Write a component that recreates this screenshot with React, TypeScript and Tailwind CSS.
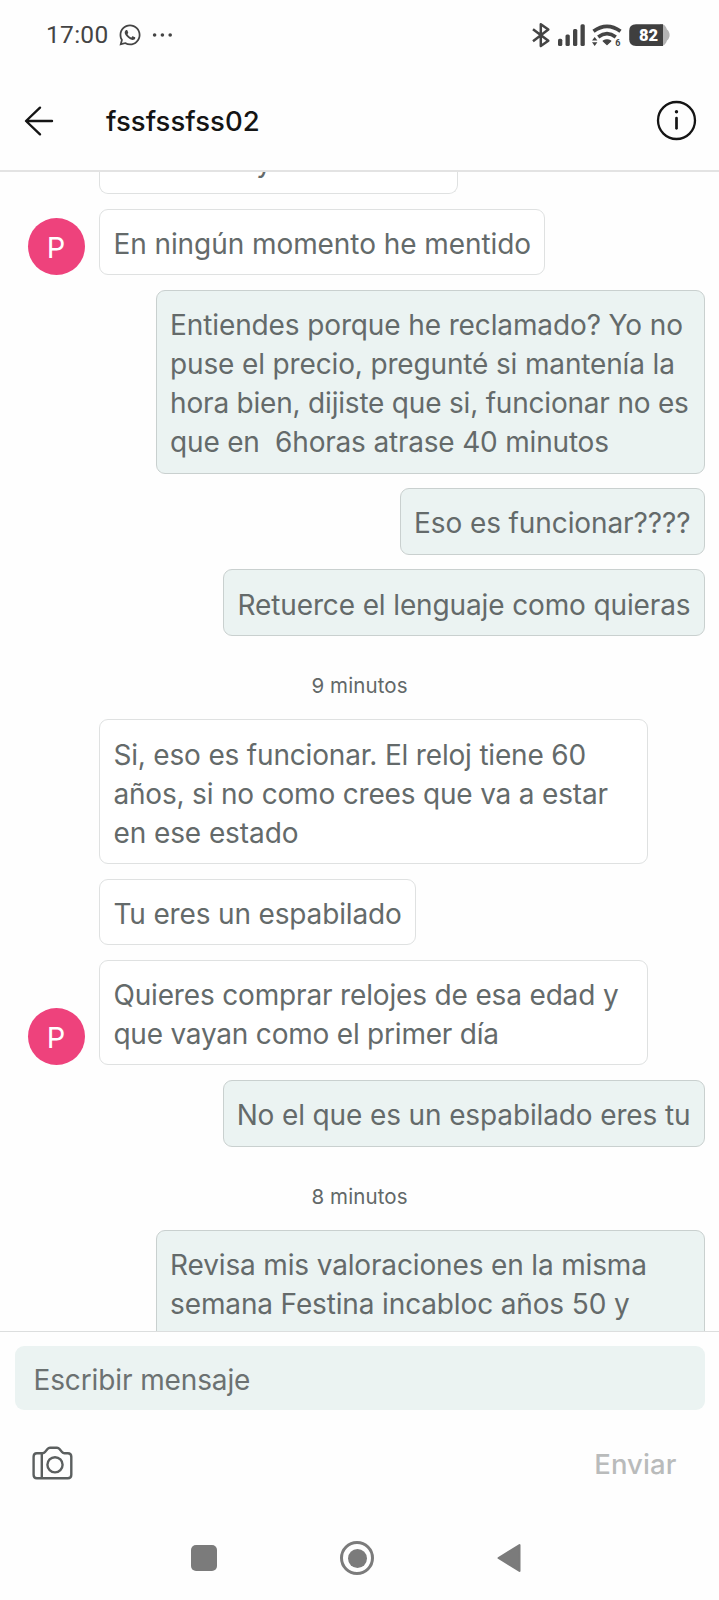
import React from "react";
import { FaWhatsapp } from "react-icons/fa";

type Line = [text: string, tracking: string];

type Item =
  | { kind: "in" | "out"; lines: Line[]; avatar?: boolean; full?: boolean }
  | { kind: "time"; label: string };

const items: Item[] = [
  { kind: "in", lines: [["En ningún momento he mentido", "tracking-[-0.07px]"]], avatar: true },
  {
    kind: "out",
    full: true,
    lines: [
      ["Entiendes porque he reclamado? Yo no", "tracking-[-0.12px]"],
      ["puse el precio, pregunté si mantenía la", "tracking-[-0.15px]"],
      ["hora bien, dijiste que si, funcionar no es", "tracking-[-0.2px]"],
      ["que en  6horas atrase 40 minutos", "tracking-[-0.19px]"],
    ],
  },
  { kind: "out", lines: [["Eso es funcionar????", "tracking-[-0.1px]"]] },
  { kind: "out", lines: [["Retuerce el lenguaje como quieras", "tracking-[-0.13px]"]] },
  { kind: "time", label: "9 minutos" },
  {
    kind: "in",
    full: true,
    lines: [
      ["Si, eso es funcionar. El reloj tiene 60", "tracking-[-0.18px]"],
      ["años, si no como crees que va a estar", "tracking-[-0.18px]"],
      ["en ese estado", "tracking-[-0.08px]"],
    ],
  },
  { kind: "in", lines: [["Tu eres un espabilado", "tracking-[-0.15px]"]] },
  {
    kind: "in",
    full: true,
    avatar: true,
    lines: [
      ["Quieres comprar relojes de esa edad y", "tracking-[-0.16px]"],
      ["que vayan como el primer día", "tracking-[-0.21px]"],
    ],
  },
  { kind: "out", lines: [["No el que es un espabilado eres tu", "tracking-[-0.13px]"]] },
  { kind: "time", label: "8 minutos" },
  {
    kind: "out",
    full: true,
    lines: [
      ["Revisa mis valoraciones en la misma", "tracking-[-0.15px]"],
      ["semana Festina incabloc años 50 y", "tracking-[-0.14px]"],
      ["", ""],
    ],
  },
];

function StatusBar() {
  return (
    <div className="flex h-[69px] shrink-0 items-center justify-between pl-[46px] pr-[49px] text-[#444]">
      <div className="flex items-center">
        <span className="w-[73px] font-['Roboto',sans-serif] text-[24.5px] leading-[30px] tracking-[0.3px]">17:00</span>
        <FaWhatsapp className="h-[24px] w-[22px]" />
        <svg className="ml-[11px]" width="22" height="6" viewBox="0 0 22 6" fill="currentColor">
          <circle cx="2.6" cy="3" r="1.8" />
          <circle cx="10.4" cy="3" r="1.8" />
          <circle cx="18.2" cy="3" r="1.8" />
        </svg>
      </div>
      <svg width="140" height="28" viewBox="530 20 140 28" fill="none">
        <path d="M533 28.2L548.3 39.8L540.8 45V23.2L548.3 28.6L533 40.3" stroke="#444" strokeWidth="2.5" strokeLinejoin="round" />
        <g fill="#444">
          <rect x="558" y="37.7" width="4.3" height="7.3" rx="1.5" />
          <rect x="565.5" y="33.6" width="4.3" height="11.4" rx="1.5" />
          <rect x="573" y="28" width="4.3" height="17" rx="1.5" />
          <rect x="580.5" y="23.3" width="4.3" height="21.7" rx="1.5" />
          <path d="M603.2 40Q607 37.6 610.8 40L607 43.600Z" stroke="#444" strokeWidth="1.2" strokeLinejoin="round" />
          <path d="M592 39.6L594.7 36L597.4 39.600Z M592 41.300L594.700 45L597.400 41.300Z" />
        </g>
        <path d="M593.500 30.300Q607 20.300 620.500 30.300M598.200 36Q607 29.400 615.800 36" stroke="#444" strokeWidth="3.600" />
        <text x="615.3" y="45" fontSize="9" fontWeight="700" fill="#444" fontFamily="Roboto, sans-serif">6</text>
        <path d="M660 23C665 23 666 26 667 28.5C670.5 31 670.5 37 667 39.5C666 42 665 45 660 45Z" fill="#b4b4b4" />
        <path d="M636 23.3H663V45H636Q629.2 45 629.2 38.3V30Q629.2 23.3 636 23.3Z" fill="#3f3f3f" />
        <text x="639" y="40" fontSize="16.5" fontWeight="900" fill="#fff" fontFamily="Roboto, sans-serif">82</text>
      </svg>
    </div>
  );
}

function Header() {
  return (
    <header className="flex h-[103px] shrink-0 items-center border-b-2 border-[#e3e3e3] pl-[24px] pr-[22px] pt-[2px] text-[#151515]">
      <svg width="30" height="30" viewBox="0 0 30 30" fill="none" stroke="currentColor" strokeWidth="2.4" strokeLinecap="round" strokeLinejoin="round">
        <path d="M28 15H2.2M16 1.7L2 15L16 28.3" />
      </svg>
      <h1 className="ml-[52px] grow text-[27.5px] font-medium leading-[36px] tracking-[0.05px]">fssfssfss02</h1>
      <svg width="41" height="41" viewBox="0 0 41 41" fill="none" stroke="currentColor">
        <circle cx="20.5" cy="20.5" r="18.5" strokeWidth="2.3" />
        <path d="M20.5 18V28.3" strokeWidth="2.7" strokeLinecap="round" />
        <circle cx="20.5" cy="11.7" r="1.7" fill="currentColor" stroke="none" />
      </svg>
    </header>
  );
}

function Row({ item }: { item: Item }) {
  if (item.kind === "time") {
    return (
      <div className="mr-[13.5px] flex h-[53.9px] shrink-0 justify-center pt-[21.2px] text-[20.5px] leading-[28px] tracking-[0.1px] text-[#626868]">
        <span>{item.label}</span>
      </div>
    );
  }
  const width = item.full ? "w-[548.5px]" : "";
  const tone =
    item.kind === "in" ? "border-[#dfe1e1] bg-white" : "ml-auto border-[#c9d0cf] bg-[#ebf3f2]";
  return (
    <div className="flex shrink-0 items-end">
      {item.kind === "in" && (
        <div className="flex w-[71.3px] shrink-0">
          {item.avatar && (
            <div className="flex size-[57px] items-center justify-center rounded-full bg-[#ee427c] pr-[1px] pt-px text-[29px] text-white">P</div>
          )}
        </div>
      )}
      <div className={`rounded-[9px] border px-[13.1px] pt-[15.2px] pb-[10.4px] ${width} ${tone}`}>
        {item.lines.map(([text, tracking]) => (
          <p key={text} className={`h-[39px] whitespace-pre leading-[39px] ${tracking}`}>
            {text}
          </p>
        ))}
      </div>
    </div>
  );
}

export default function App() {
  return (
    <div className="flex h-[1600px] w-[719px] flex-col overflow-hidden bg-[#fefefe] font-['Inter',sans-serif]">
      <StatusBar />
      <Header />
      <main className="flex h-[1158.5px] shrink-0 flex-col gap-[14.7px] overflow-hidden pl-[28px] pr-[14.5px] text-[28px] text-[#646a6a]">
        <div className="ml-[71.3px] h-[22px] w-[358.5px] shrink-0 rounded-b-[9px] border border-t-0 border-[#dfe1e1] bg-white pl-[156px]">
          <p className="-mt-[29px] leading-[39px]">y</p>
        </div>
        {items.map((item, i) => (
          <Row key={i} item={item} />
        ))}
      </main>
      <footer className="flex grow flex-col border-t border-[#dcdede]">
        <div className="mx-[14.5px] mt-[14.5px] flex h-[64px] items-center rounded-[9px] bg-[#ebf3f2] pl-[19px] pt-[3px] text-[28px] tracking-[-0.12px] text-[#6b7171]">
          Escribir mensaje
        </div>
        <div className="flex h-[106px] items-center justify-between pl-[32px] pr-[42.5px]">
          <svg width="41" height="34" viewBox="0 0 41 34" fill="none" stroke="#5b5f5f" strokeWidth="2.4" strokeLinejoin="round">
            <path d="M4.8 7.2H10.500Q12 7.200 13 6L15.5 3Q16.5 1.8 18 1.8H25Q26.5 1.8 27.5 3L30 6Q31 7.200 32.500 7.200H35.8Q39.3 7.2 39.3 10.7V28.7Q39.3 32.2 35.8 32.2H4.8Q1.6 32.2 1.6 28.7V10.7Q1.6 7.2 4.8 7.2ZM9.8 7.2V32.2" />
            <circle cx="23" cy="18.8" r="7.6" />
          </svg>
          <span className="pt-[3px] text-[27.5px] font-medium tracking-[0.1px] text-[#b9bbbb]">Enviar</span>
        </div>
        <nav className="flex h-[84px] items-center pl-[191px]">
          <div className="size-[26px] rounded-[5px] bg-[#7b7b7b]" />
          <div className="ml-[123px] flex size-[34px] items-center justify-center rounded-full border-[3px] border-[#7b7b7b]">
            <div className="size-[19px] rounded-full bg-[#7b7b7b]" />
          </div>
          <svg className="ml-[123px]" width="24" height="30" viewBox="0 0 24 30">
            <path d="M1.5 15L22.5 2V28Z" fill="#7b7b7b" stroke="#7b7b7b" strokeWidth="2" strokeLinejoin="round" />
          </svg>
        </nav>
      </footer>
    </div>
  );
}
